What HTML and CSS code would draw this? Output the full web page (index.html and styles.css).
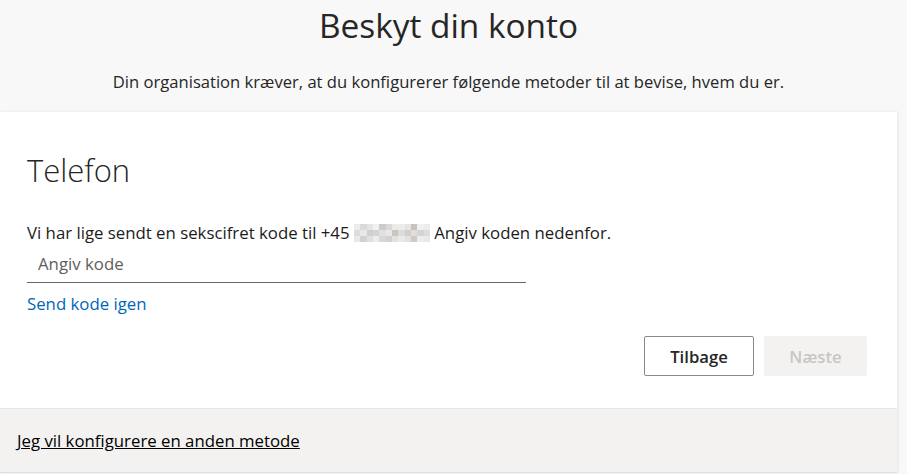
FILE: index.html
```html
<!DOCTYPE html>
<html lang="da">
<head>
<meta charset="utf-8">
<title>Beskyt din konto</title>
<link rel="stylesheet" href="styles.css">
</head>
<body>
<div class="page">
  <header class="head">
    <h1 class="title">Beskyt din konto</h1>
    <p class="sub">Din organisation kræver, at du konfigurerer følgende metoder til at bevise, hvem du er.</p>
  </header>
  <main class="card">
    <section class="body">
      <h2 class="method">Telefon</h2>
      <p class="info">Vi har lige sendt en sekscifret kode til +45 <span class="blur"><i class="c1"></i><i class="c2"></i><i class="c3"></i><i class="c4"></i><i class="c5"></i><i class="c2"></i><i class="c6"></i><i class="c1"></i><i class="c3"></i><i class="c7"></i><i class="c4"></i><i class="c1"></i></span> Angiv koden nedenfor.</p>
      <input class="code" type="text" placeholder="Angiv kode">
      <a class="resend" href="#">Send kode igen</a>
      <div class="actions">
        <button class="btn back" type="button">Tilbage</button>
        <button class="btn next" type="button" disabled>Næste</button>
      </div>
    </section>
    <footer class="foot">
      <a class="other" href="#">Jeg vil konfigurere en anden metode</a>
    </footer>
  </main>
</div>
</body>
</html>
```
FILE: styles.css
```css
* { box-sizing: border-box; }
html, body { margin: 0; padding: 0; }
body {
  background: #f8f8f8;
  font-family: "Open Sans", "Noto Sans", sans-serif;
  color: #1b1b1b;
  height: 474px;
  overflow: hidden;
}
.page {
  width: 897px;
}
.head {
  text-align: center;
  padding-top: 2px;
}
.title {
  margin: 0;
  font-size: 33.4px;
  font-weight: 400;
  line-height: 46px;
  color: #262626;
}
.sub {
  margin: 24px 0 0;
  font-size: 16.6px;
  line-height: 20px;
  color: #262626;
}
.card {
  margin-top: 20px;
  background: #fff;
  box-shadow: 1px 0 3px rgba(0,0,0,0.08);
}
.body {
  padding: 38px 30px 32px 27px;
  display: flex;
  flex-direction: column;
  align-items: flex-start;
}
.method {
  margin: 0;
  font-size: 31px;
  font-weight: 300;
  line-height: 40px;
  color: #262626;
}
.info {
  margin: 32px 0 0;
  font-size: 16.8px;
  line-height: 22px;
  display: flex;
  align-items: center;
  white-space: pre;
}
.blur {
  display: inline-flex;
  width: 76px;
  height: 18px;
}
.blur i { flex: 1; height: 100%; }
.c1 { background: linear-gradient(#ececec 33%, #dcdcdc 33% 66%, #e9e9e9 66%); }
.c2 { background: linear-gradient(#d9d9d9 33%, #e8e8e8 33% 66%, #d2d2d2 66%); }
.c3 { background: linear-gradient(#e4e4e4 33%, #cfcfcf 33% 66%, #e0e0e0 66%); }
.c4 { background: linear-gradient(#f1f1f1 33%, #d4d4d4 33% 66%, #ececec 66%); }
.c5 { background: linear-gradient(#cccccc 33%, #e0e0e0 33% 66%, #d8d8d8 66%); }
.c6 { background: linear-gradient(#eeeae6 33%, #c9c5bf 33% 66%, #e3e1de 66%); }
.c7 { background: linear-gradient(#c8c2b8 33%, #dedede 33% 66%, #cfcac4 66%); }
.code {
  width: 499px;
  height: 39px;
  border: 0;
  border-bottom: 1px solid #666;
  padding: 0 11px;
  font-family: inherit;
  font-size: 16.8px;
  color: #1b1b1b;
  background: transparent;
  outline: none;
}
.code::placeholder { color: #605e5c; }
.resend {
  margin-top: 10px;
  font-size: 16.8px;
  line-height: 22px;
  color: #0067b8;
  text-decoration: none;
}
.actions {
  align-self: stretch;
  display: flex;
  justify-content: flex-end;
  gap: 10px;
  margin-top: 21px;
}
.btn {
  height: 40px;
  padding: 0;
  font-family: inherit;
  font-size: 16.7px;
  font-weight: 600;
  border-radius: 2px;
}
.back {
  width: 110px;
  background: #fff;
  border: 1px solid #8a8886;
  color: #262626;
}
.next {
  width: 103px;
  background: #f3f2f1;
  border: 1px solid #f3f2f1;
  color: #c8c6c4;
}
.foot {
  height: 65px;
  background: #f3f2f1;
  border-top: 1px solid #e6e6e6;
  border-bottom: 1px solid #e1dfdd;
  padding: 21px 17px 0;
  line-height: 22px;
}
.other {
  font-size: 16.8px;
  line-height: 22px;
  color: #000;
  text-decoration: underline;
}
```
